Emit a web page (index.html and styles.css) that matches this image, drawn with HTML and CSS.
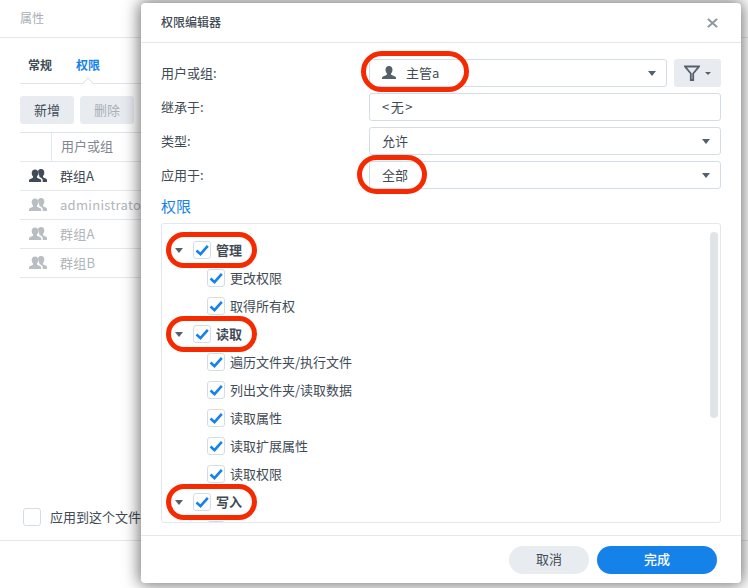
FILE: index.html
```html
<!DOCTYPE html>
<html lang="zh">
<head>
<meta charset="utf-8">
<title>权限编辑器</title>
<link rel="stylesheet" href="styles.css">
</head>
<body>
<svg class="defs" width="0" height="0" aria-hidden="true">
  <symbol id="group" viewBox="0 0 18 14">
    <path d="M12.2 0c2 0 3.1 1.500 3.100 3.500 0 1.500-.5 2.700-1.300 3.500v1.300l3.200 1.500c.5.300.8.700.8 1.200V13h-4.300v-1.700c0-1-.5-1.700-1.400-2.200l-1.900-1V7c-.6-.9-1-2-1-3.300C8.400 1.500 10 0 12.200 0z"/>
    <path d="M6 .5c2.100 0 3.300 1.500 3.300 3.600 0 1.400-.5 2.600-1.300 3.400v1.200l3.400 1.600c.5.300.8.700.8 1.200V13H0v-1.500c0-.5.300-.9.800-1.200L4 8.700V7.500C3.200 6.700 2.700 5.500 2.700 4.100 2.700 2 3.900.5 6 .5z"/>
  </symbol>
  <symbol id="check" viewBox="0 0 18 18">
    <path d="M3.500 9.500 7.500 13.200 14.800 4.800" fill="none" stroke="#1582ea" stroke-width="2.600"/>
  </symbol>
</svg>

<div class="stage">
  <section class="props">
    <header class="props-head">属性</header>
    <div class="props-body">
      <nav class="tabs">
        <span class="tab">常规</span>
        <span class="tab tab-on">权限</span>
        <i class="tab-notch"></i>
      </nav>
      <div class="toolbar">
        <button class="btn">新增</button>
        <button class="btn btn-off">删除</button>
      </div>
      <div class="table">
        <div class="t-head"><span class="t-icon-col"></span><span class="t-name">用户或组</span></div>
        <div class="t-row"><svg class="ico-group"><use href="#group"/></svg><span>群组A</span></div>
        <div class="t-row t-dim"><svg class="ico-group"><use href="#group"/></svg><span>administrators</span></div>
        <div class="t-row t-dim"><svg class="ico-group"><use href="#group"/></svg><span>群组A</span></div>
        <div class="t-row t-dim"><svg class="ico-group"><use href="#group"/></svg><span>群组B</span></div>
      </div>
      <label class="apply"><i class="box"></i><span>应用到这个文件夹</span></label>
    </div>
    <div class="props-foot"></div>
  </section>

  <section class="dialog">
    <header class="d-head">
      <span>权限编辑器</span>
      <svg class="close" viewBox="0 0 12 12" preserveAspectRatio="none"><path d="M1 1 11 11M11 1 1 11" stroke="#8e969e" stroke-width="2.400" fill="none"/></svg>
    </header>
    <div class="d-body">
      <div class="f-row">
        <span class="f-label">用户或组:</span>
        <div class="f-field f-select f-user">
          <svg class="ico-user" viewBox="0 0 14 14"><path fill="#56606a" d="M7 0c2.200 0 3.500 1.600 3.500 3.800 0 1.500-.6 2.800-1.400 3.600v1.300l3.900 1.900c.6.300 1 .7 1 1.300V13H0v-1.100c0-.6.400-1 1-1.300l3.900-1.900V7.400C4.100 6.600 3.500 5.300 3.500 3.800 3.500 1.600 4.800 0 7 0z"/></svg>
          <span>主管a</span>
          <i class="caret"></i>
        </div>
        <button class="filter">
          <svg viewBox="0 0 16 16"><path d="M1 1.500h14L9.200 8.500v6.500H6.800V8.500z" fill="none" stroke="#56606a" stroke-width="1.800"/></svg>
          <i class="caret caret-small"></i>
        </button>
      </div>
      <div class="f-row">
        <span class="f-label">继承于:</span>
        <div class="f-field"><span class="f-none">&lt;无&gt;</span></div>
      </div>
      <div class="f-row">
        <span class="f-label">类型:</span>
        <div class="f-field f-select"><span>允许</span><i class="caret"></i></div>
      </div>
      <div class="f-row">
        <span class="f-label">应用于:</span>
        <div class="f-field f-select"><span>全部</span><i class="caret"></i></div>
      </div>
      <h2 class="perm-title">权限</h2>
      <div class="tree">
        <div class="tree-list">
          <div class="node node-group"><i class="caret"></i><i class="box"><svg><use href="#check"/></svg></i><b>管理</b></div>
          <div class="node"><i class="box"><svg><use href="#check"/></svg></i><span>更改权限</span></div>
          <div class="node"><i class="box"><svg><use href="#check"/></svg></i><span>取得所有权</span></div>
          <div class="node node-group"><i class="caret"></i><i class="box"><svg><use href="#check"/></svg></i><b>读取</b></div>
          <div class="node"><i class="box"><svg><use href="#check"/></svg></i><span>遍历文件夹/执行文件</span></div>
          <div class="node"><i class="box"><svg><use href="#check"/></svg></i><span>列出文件夹/读取数据</span></div>
          <div class="node"><i class="box"><svg><use href="#check"/></svg></i><span>读取属性</span></div>
          <div class="node"><i class="box"><svg><use href="#check"/></svg></i><span>读取扩展属性</span></div>
          <div class="node"><i class="box"><svg><use href="#check"/></svg></i><span>读取权限</span></div>
          <div class="node node-group"><i class="caret"></i><i class="box"><svg><use href="#check"/></svg></i><b>写入</b></div>
          <div class="node"><i class="box"></i><span></span></div>
        </div>
        <i class="scrollbar"></i>
      </div>
    </div>
    <footer class="d-foot">
      <button class="pill pill-gray">取消</button>
      <button class="pill pill-blue">完成</button>
    </footer>
  </section>

  <i class="ring ring-user"></i>
  <i class="ring ring-all"></i>
  <i class="ring ring-g1"></i>
  <i class="ring ring-g2"></i>
  <i class="ring ring-g3"></i>
</div>
</body>
</html>
```

FILE: styles.css
```css
* { box-sizing: border-box; }
html, body { margin: 0; height: 100%; overflow: hidden; background: #fff; }
body { font-family: "Noto Sans CJK SC", "Noto Sans", sans-serif; font-size: 13px; color: #414b55; }
.defs { position: absolute; }
.stage { position: relative; width: 748px; height: 588px; overflow: hidden; }
i { display: block; font-style: normal; }
button { font: inherit; border: 0; padding: 0 0 2px; color: inherit; }

.props { height: 588px; display: flex; flex-direction: column; }
.props-head { height: 38px; padding: 0 20px; line-height: 36px; font-size: 12px; color: #a9afb5; border-bottom: 1px solid #e3e8ee; }
.props-body { height: 503px; padding: 0 20px; display: flex; flex-direction: column; border-bottom: 1px solid #e3e8ee; }
.tabs { position: relative; height: 46px; display: flex; gap: 24px; padding: 18px 8px 0; line-height: 18px; font-size: 12px; font-weight: 700; border-bottom: 1px solid #dde4ec; color: #414b55; }
.tab-on { color: #1582ea; }
.tab-notch { position: absolute; left: 64px; top: 41px; width: 8px; height: 8px; background: #fff; border-left: 1px solid #dde4ec; border-top: 1px solid #dde4ec; transform: rotate(45deg); }
.toolbar { display: flex; gap: 6px; margin-top: 12px; }
.btn { width: 54px; height: 28px; border-radius: 3px; background: #e8ecf1; }
.btn-off { color: #a9afb5; }
.table { margin-top: 8px; border-top: 1px solid #dde4ec; flex: none; }
.t-head { height: 29px; display: flex; border-bottom: 1px solid #e3e8ee; line-height: 25px; color: #7f8791; }
.t-icon-col { width: 32px; border-right: 1px solid #e3e8ee; }
.t-name { padding-left: 9px; }
.t-row { height: 29px; display: flex; align-items: center; gap: 13px; padding-left: 9px; border-bottom: 1px solid #e3e8ee; white-space: nowrap; }
.t-row span { padding-bottom: 2px; }
.t-dim { color: #b0b5bb; letter-spacing: .3px; }
.ico-group { width: 18px; height: 14px; fill: #414b55; margin-top: -1px; }
.t-dim .ico-group { fill: #b9bec4; }
.apply { margin-top: auto; margin-bottom: 14px; padding-left: 3px; display: flex; align-items: center; gap: 9px; }
.box { width: 18px; height: 18px; border: 1px solid #d4dde7; border-radius: 3px; background: #fff; flex: none; }
.box svg { display: block; width: 18px; height: 18px; margin: -1px; }
.props-foot { flex: 1; }

.dialog { position: absolute; left: 141px; top: 3px; width: 600px; height: 580px; background: #fff; border-radius: 4px; box-shadow: 0 0 16px 2px rgba(0,0,0,.55); display: flex; flex-direction: column; }
.d-head { height: 40px; flex: none; display: flex; align-items: center; justify-content: space-between; padding: 0 23px 2px 20px; font-size: 12px; font-weight: 500; border-bottom: 1px solid #e3e8ee; }
.close { width: 11px; height: 10px; margin-top: 3px; }
.d-body { flex: 1; padding: 16px 20px 0; display: flex; flex-direction: column; min-height: 0; }
.f-row { display: flex; gap: 7px; height: 28px; margin-bottom: 6px; align-items: center; }
.f-label { width: 201px; flex: none; padding-bottom: 2px; }
.f-field { flex: 1; height: 28px; border: 1px solid #d4dde7; border-radius: 3px; display: flex; align-items: center; padding-left: 12px; position: relative; }
.f-field span { padding-bottom: 2px; }
.f-none { letter-spacing: 1.500px; }
.f-select { padding-right: 28px; }
.f-select > .caret { position: absolute; right: 10px; top: 11px; }
.f-user { gap: 10px; }
.ico-user { width: 14px; height: 14px; }
.caret { width: 0; height: 0; border: 4.500px solid transparent; border-top: 5px solid #56606a; border-bottom: 0; }
.caret-small { border-width: 3px 3.500px 0; }
.filter { width: 47px; height: 28px; border-radius: 3px; background: #e8ecf1; display: flex; align-items: center; justify-content: center; gap: 5px; padding: 0; }
.filter svg { width: 16px; height: 16px; }
.perm-title { margin: -1px 0 5px; font-size: 15px; line-height: 24px; font-weight: 400; color: #1582ea; }
.tree { position: relative; height: 300px; flex: none; border: 1px solid #e3e8ee; border-radius: 3px; overflow: hidden; }
.tree-list { padding-top: 12px; }
.node { height: 28px; display: flex; align-items: center; padding-left: 45px; gap: 5px; }
.node span, .node b { padding-bottom: 2px; }
.node-group { padding-left: 13px; }
.node-group .caret { margin-right: 5px; }
.node-group b { font-weight: 700; }
.scrollbar { position: absolute; right: 2px; top: 8px; width: 8px; height: 186px; border-radius: 4px; background: #dfe4e9; }
.d-foot { height: 48px; flex: none; margin-top: 12px; border-top: 1px solid #e3e8ee; display: flex; justify-content: flex-end; align-items: center; gap: 8px; padding: 0 24px 0 0; }
.pill { height: 28px; border-radius: 14px; }
.pill-gray { width: 80px; background: #e8ecf1; }
.pill-blue { width: 120px; background: #1582ea; color: #fff; font-weight: 500; }

.ring { position: absolute; border: 5px solid #f52a00; }
.ring-user { left: 361px; top: 51px; width: 108px; height: 41px; border-radius: 21px; }
.ring-all { left: 357px; top: 155px; width: 70px; height: 39px; border-radius: 20px; }
.ring-g1 { left: 166px; top: 232px; width: 91px; height: 36px; border-radius: 18px; }
.ring-g2 { left: 166px; top: 316px; width: 91px; height: 36px; border-radius: 18px; }
.ring-g3 { left: 166px; top: 484px; width: 91px; height: 36px; border-radius: 18px; }
```
